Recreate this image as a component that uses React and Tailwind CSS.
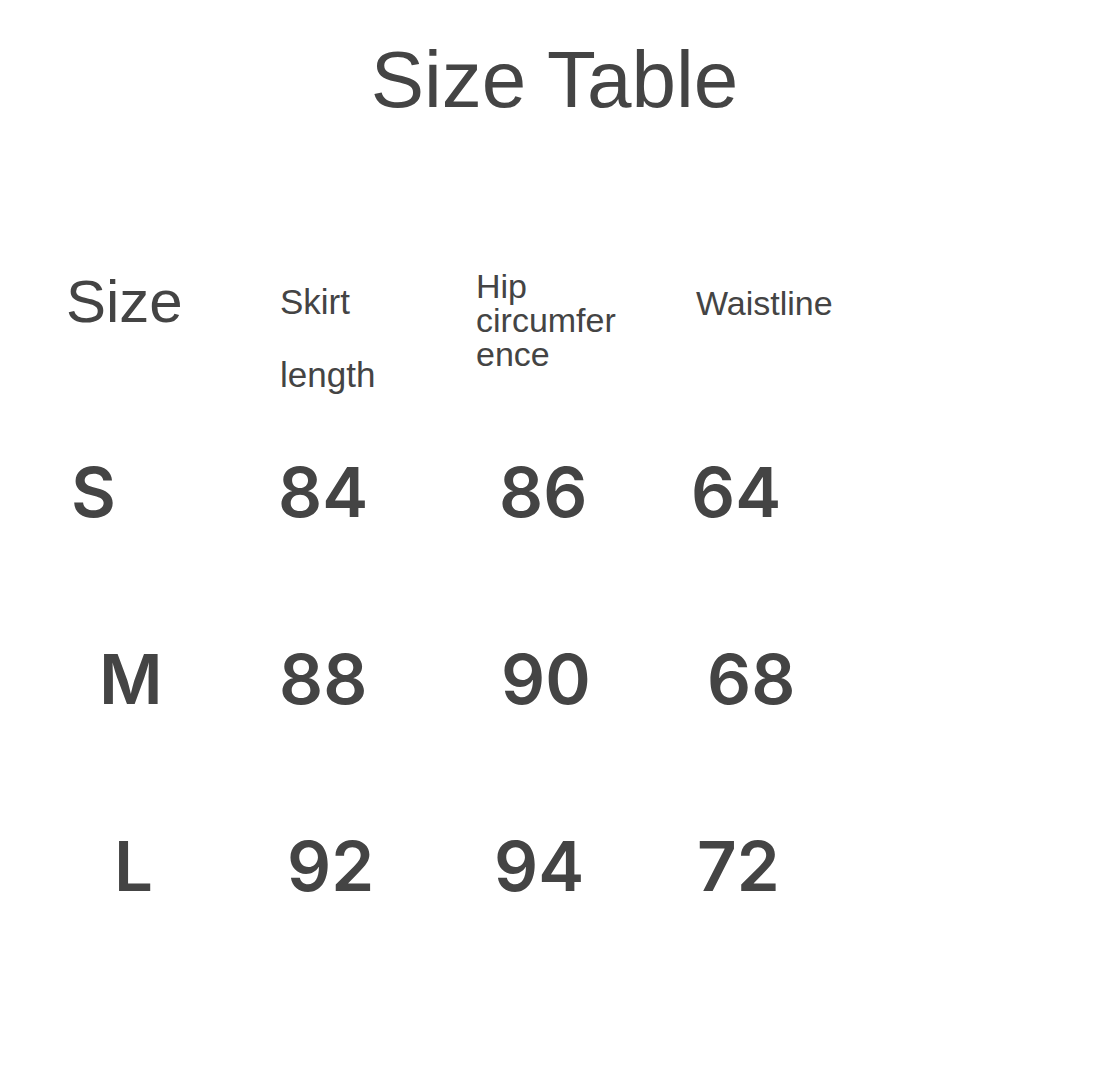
const ROWS = [
  { label: "S", values: ["84", "86", "64"], pads: ["pl-[5px]", "pl-0", "pl-[24px]", "pl-0"] },
  { label: "M", values: ["88", "90", "68"], pads: ["pl-[33px]", "pl-[1px]", "pl-[26px]", "pl-[16px]"] },
  { label: "L", values: ["92", "94", "72"], pads: ["pl-[48px]", "pl-[9px]", "pl-[19px]", "pl-[6px]"] },
];

export default function App() {
  return (
    <div className="h-[1080px] w-[1117px] overflow-hidden bg-white font-['Liberation_Sans',Arial,sans-serif] text-[#444444]">
      <h1 className="pt-[40px] pr-[8px] text-center text-[80px] leading-none">Size Table</h1>

      <div className="mt-[142px] pl-[66px]">
        {/* header row */}
        <div className="grid h-[196px] grid-cols-[212px_197px_216px_auto] items-start">
          <div className="mt-[10px] text-[60px] leading-none">Size</div>
          <div className="mt-[3px] pl-[2px] text-[35px] leading-[73px]">
            Skirt
            <br />
            length
          </div>
          <div className="mt-[7px] pl-[1px] text-[34px] leading-[34px]">
            Hip
            <br />
            circumfer
            <br />
            ence
          </div>
          <div className="mt-[24px] pl-[5px] text-[34px] leading-none">Waistline</div>
        </div>

        {ROWS.map((row) => (
          <div
            key={row.label}
            className="grid h-[187px] grid-cols-[212px_197px_216px_auto] items-start font-['Inter',sans-serif] text-[69px] font-semibold leading-none"
          >
            <div className={row.pads[0]}>{row.label}</div>
            {row.values.map((v, i) => (
              <div key={i} className={row.pads[i + 1]}>
                {v}
              </div>
            ))}
          </div>
        ))}
      </div>
    </div>
  );
}
